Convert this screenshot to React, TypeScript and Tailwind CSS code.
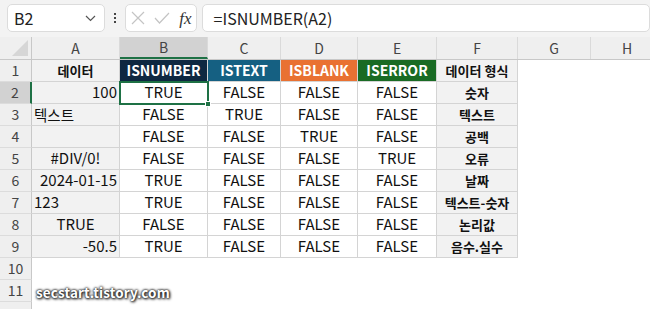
import React from "react";

type Row = {
  a: string;
  align: "left" | "right" | "center";
  vals: string[];
  f: string;
};

const rows: Row[] = [
  { a: "100", align: "right", vals: ["TRUE", "FALSE", "FALSE", "FALSE"], f: "숫자" },
  { a: "텍스트", align: "left", vals: ["FALSE", "TRUE", "FALSE", "FALSE"], f: "텍스트" },
  { a: "", align: "left", vals: ["FALSE", "FALSE", "TRUE", "FALSE"], f: "공백" },
  { a: "#DIV/0!", align: "center", vals: ["FALSE", "FALSE", "FALSE", "TRUE"], f: "오류" },
  { a: "2024-01-15", align: "right", vals: ["TRUE", "FALSE", "FALSE", "FALSE"], f: "날짜" },
  { a: "123", align: "left", vals: ["TRUE", "FALSE", "FALSE", "FALSE"], f: "텍스트-숫자" },
  { a: "TRUE", align: "center", vals: ["FALSE", "FALSE", "FALSE", "FALSE"], f: "논리값" },
  { a: "-50.5", align: "right", vals: ["TRUE", "FALSE", "FALSE", "FALSE"], f: "음수.실수" },
];

const colW = ["w-[88px]", "w-[73px]", "w-[77px]", "w-[79px]"];
const heads = [
  { t: "ISNUMBER", bg: "bg-[#0e2841]" },
  { t: "ISTEXT", bg: "bg-[#156082]" },
  { t: "ISBLANK", bg: "bg-[#e97132]" },
  { t: "ISERROR", bg: "bg-[#196b24]" },
];

function RowNum({ n, sel }: { n?: number; sel?: boolean }) {
  return (
    <div
      className={
        "w-[32px] h-[22px] shrink-0 flex items-center justify-center text-[14px] text-[#444] border-b border-[#dcdcdc] " +
        (sel ? "bg-[#d2d2d2] border-r-2 border-r-[#1e7145]" : "bg-[#efefef] border-r border-r-[#c8c8c8]")
      }
    >
      {n}
    </div>
  );
}

export default function App() {
  const letters = ["A", "B", "C", "D", "E", "F", "G", "H"];
  const letterW = ["w-[88px]", "w-[88px]", "w-[73px]", "w-[77px]", "w-[79px]", "w-[81px]", "w-[73px]", "w-[73px]"];
  const cell =
    "h-[22px] shrink-0 flex items-center whitespace-nowrap overflow-hidden border-r border-b border-[#d4d4d4] text-[#111]";

  return (
    <div className="relative w-[650px] h-[309px] overflow-hidden bg-white font-['Noto_Sans_CJK_KR','Noto_Sans',sans-serif]">
      {/* 수식 입력줄 */}
      <div className="h-[37px] bg-[#f3f3f3] flex items-start pt-[4px] pl-[7px]">
        <div className="w-[100px] h-[28px] bg-white border border-[#dcdcdc] rounded-[5px] flex items-center justify-between pl-[6px] pr-[8px]">
          <span className="text-[16px] text-[#222]">B2</span>
          <svg width="11" height="7" viewBox="0 0 11 7">
            <path d="M1 1l4.5 4.5L10 1" fill="none" stroke="#555" strokeWidth="1.2" />
          </svg>
        </div>
        <div className="w-[21px] h-[28px] flex flex-col items-center justify-center gap-[2px]">
          <div className="w-[2px] h-[2px] bg-[#444]" />
          <div className="w-[2px] h-[2px] bg-[#444]" />
          <div className="w-[2px] h-[2px] bg-[#444]" />
        </div>
        <div className="w-[73px] h-[28px] bg-white border border-[#dcdcdc] rounded-[5px] flex items-center pl-[5px] gap-[9px]">
          <svg width="14" height="14" viewBox="0 0 14 14">
            <path d="M1 1l12 12M13 1L1 13" stroke="#c4c4c4" strokeWidth="1.2" />
          </svg>
          <svg width="16" height="12" viewBox="0 0 16 12">
            <path d="M1 6l4.5 5L15 1" fill="none" stroke="#c4c4c4" strokeWidth="1.2" />
          </svg>
          <span className="text-[17px] italic text-[#333] font-['Liberation_Serif',serif] leading-none">fx</span>
        </div>
        <div className="ml-[5px] w-[460px] h-[28px] bg-white border border-[#dcdcdc] rounded-[5px] flex items-center pl-[11px]">
          <span className="text-[16px] text-[#222]">=ISNUMBER(A2)</span>
        </div>
      </div>

      {/* 열 머리글 */}
      <div className="flex h-[23px] bg-[#efefef] border-b border-[#c8c8c8]">
        <div className="w-[32px] shrink-0 border-r border-[#c8c8c8] flex items-end justify-end pr-[3px] pb-[3px]">
          <svg width="16" height="16" viewBox="0 0 16 16">
            <path d="M16 0V16H0Z" fill="#d6d6d6" />
          </svg>
        </div>
        {letters.map((l, i) => (
          <div
            key={l}
            className={
              letterW[i] +
              " shrink-0 flex items-center justify-center text-[14px] text-[#444] border-r border-[#dadada] " +
              (l === "B" ? "bg-[#d2d2d2] border-b-2 border-b-[#1e7145] text-[#1e7145]" : "")
            }
          >
            {l}
          </div>
        ))}
      </div>

      {/* 1행 */}
      <div className="flex">
        <RowNum n={1} />
        <div className={cell + " w-[88px] justify-center bg-[#f2f2f2] font-bold text-[13px]"}>데이터</div>
        {heads.map((h, i) => (
          <div key={h.t} className={cell + " " + colW[i] + " " + h.bg + " justify-center text-white font-bold text-[14px]"}>
            {h.t}
          </div>
        ))}
        <div className={cell + " w-[81px] justify-center bg-[#f2f2f2] font-bold text-[13px]"}>데이터 형식</div>
      </div>

      {rows.map((r, ri) => (
        <div key={ri} className="flex">
          <RowNum n={ri + 2} sel={ri === 0} />
          <div
            className={
              cell +
              " w-[88px] bg-[#f2f2f2] px-[2px] " +
              (r.align === "right" ? "justify-end" : r.align === "center" ? "justify-center" : "justify-start") +
              (/[가-힣]/.test(r.a) ? " text-[14.5px]" : " text-[15px]")
            }
          >
            {r.a}
          </div>
          {r.vals.map((v, vi) => (
            <div
              key={vi}
              className={cell + " " + colW[vi] + " justify-center text-[15px] bg-white" + (ri === 0 && vi === 0 ? " relative overflow-visible" : "")}
            >
              {v}
              {ri === 0 && vi === 0 && (
                <div className="absolute left-[-1px] top-[-1px] w-[90px] h-[24px] border-2 border-[#1e7145]">
                  <div className="absolute right-[-4px] bottom-[-4px] w-[6px] h-[6px] bg-[#1e7145] border border-white" />
                </div>
              )}
            </div>
          ))}
          <div className={cell + " w-[81px] justify-center bg-[#f2f2f2] font-bold text-[13px]"}>{r.f}</div>
        </div>
      ))}

      <div className="flex">
        <RowNum n={10} />
      </div>
      <div className="flex">
        <RowNum n={11} />
      </div>
      <div className="flex">
        <RowNum />
      </div>

      {/* 워터마크 */}
      <div className="absolute left-[36px] top-[282px] text-[13.5px] font-bold text-white tracking-[0.1px] [text-shadow:0_0_2px_#222,0_0_3px_#222,1px_1px_3px_#000]">
        secstart.tistory.com
      </div>
    </div>
  );
}
